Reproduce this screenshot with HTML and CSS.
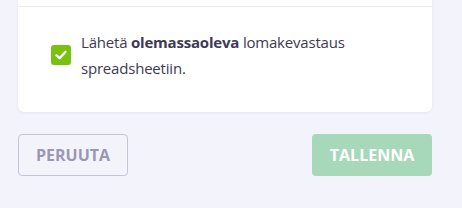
FILE: index.html
```html
<!DOCTYPE html>
<html lang="fi">

<head>
  <meta charset="UTF-8">
  <meta name="viewport" content="width=device-width, initial-scale=1.0">
  <title>Lomakeasetukset</title>
  <link rel="stylesheet" href="styles.css">
</head>

<body>
  <div class="card">
    <div class="card-top"></div>
    <div class="card-body">
      <label class="check-row">
        <span class="check-box">
          <svg width="14" height="14" viewBox="0 0 14 14">
            <path d="M2.5 7.3 L5.6 10.2 L11.5 3.8" fill="none" stroke="#fff" stroke-width="2.4" stroke-linecap="round" stroke-linejoin="round" />
          </svg>
        </span>
        <span class="check-text">Lähetä <b>olemassaoleva</b> lomakevastaus spreadsheetiin.</span>
      </label>
    </div>
  </div>

  <div class="actions">
    <button class="button cancel">PERUUTA</button>
    <button class="button save">TALLENNA</button>
  </div>
</body>

</html>
```

FILE: styles.css
```css
body {
  margin: 0;
  padding: 0 30px 0 18px;
  background-color: #f3f3fc;
  font-family: "Open Sans", Arial, sans-serif;
  color: #3d3a54;
}

.card {
  margin-top: -20px;
  background-color: #fff;
  border-radius: 6px;
  box-shadow: 0 1px 3px rgba(80, 80, 160, 0.08);
}

.card-top {
  height: 26px;
  border-bottom: 1px solid #ebebf3;
}

.card-body {
  padding: 22px 32px 31px 33px;
}

.check-row {
  display: flex;
  align-items: center;
  gap: 10px;
}

.check-box {
  flex: none;
  width: 20px;
  height: 20px;
  border-radius: 3px;
  background-color: #78c10e;
  display: flex;
  justify-content: center;
  align-items: center;
}

.check-text {
  font-size: 15px;
  line-height: 26px;
  letter-spacing: -0.2px;
  max-width: 290px;
}

.check-text b {
  font-weight: 700;
}

.actions {
  display: flex;
  justify-content: space-between;
  margin-top: 22px;
}

.button {
  height: 42px;
  border-radius: 4px;
  font-family: "Open Sans", Arial, sans-serif;
  font-size: 16px;
  font-weight: 700;
  cursor: pointer;
}

.button.cancel {
  width: 110px;
  background-color: transparent;
  border: 1px solid #c6c3d6;
  color: #9b97b3;
}

.button.save {
  width: 120px;
  background-color: #a7d8b9;
  border: none;
  color: #fff;
}
```
